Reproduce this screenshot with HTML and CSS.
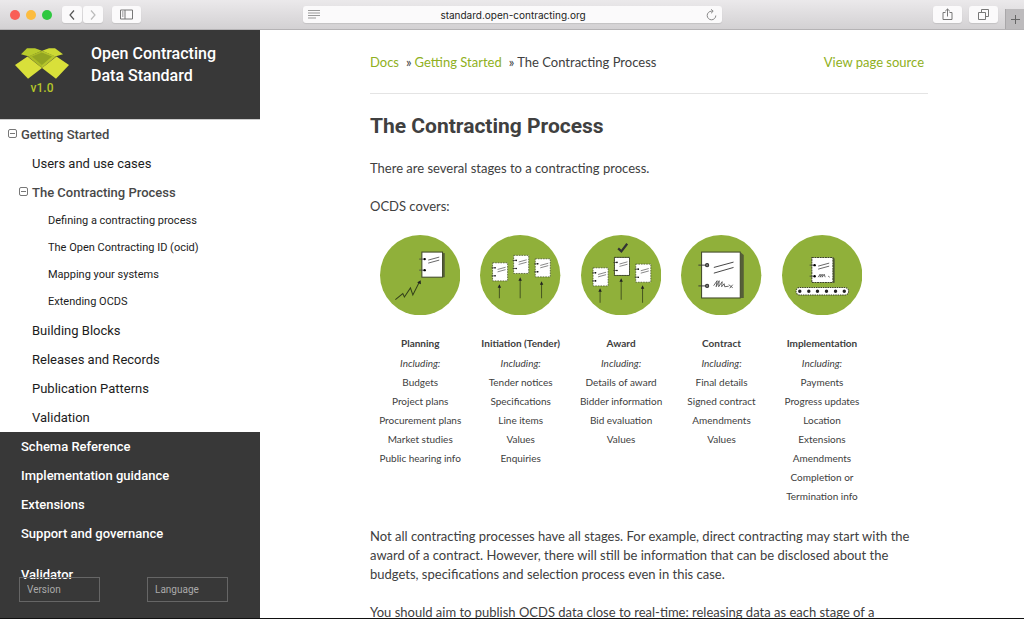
FILE: index.html
```html
<!DOCTYPE html>
<html lang="en">
<head>
<meta charset="utf-8">
<title>The Contracting Process</title>
<link rel="stylesheet" href="styles.css">
</head>
<body>
<svg class="defs" width="0" height="0" aria-hidden="true">
  <symbol id="note" viewBox="0 0 18 20" overflow="visible">
    <rect x="1" y="1" width="15" height="18" fill="#fff" stroke="#3e4a22" stroke-width=".7" stroke-dasharray="1.6 1"/>
    <path d="M0 6h3M0 14h3" stroke="#333" stroke-width=".8"/><circle cx="3.500" cy="6" r=".8"/><circle cx="3.500" cy="14" r=".8"/>
    <path d="M6 7.600l8-2.200M6 10l8-2.200" stroke="#555" stroke-width=".7"/>
  </symbol>
</svg>
<header class="toolbar">
  <div class="lights"><i class="light red"></i><i class="light amber"></i><i class="light green"></i></div>
  <div class="history">
    <button class="tool" aria-label="Back"><svg width="8" height="12" viewBox="0 0 8 12"><path d="M6 1.500L2 6l4 4.500" fill="none" stroke="#555" stroke-width="1.200"/></svg></button>
    <button class="tool" aria-label="Forward"><svg width="8" height="12" viewBox="0 0 8 12"><path d="M2 1.500L6 6l-4 4.500" fill="none" stroke="#bbb" stroke-width="1.200"/></svg></button>
  </div>
  <button class="tool wide" aria-label="Sidebar"><svg width="13" height="11" viewBox="0 0 13 11" fill="none" stroke="#777"><path d="M.5 1h12v9H.5zM5 1v9M2 3h1.500M2 5h1.500M2 7h1.500"/></svg></button>
  <div class="address">
    <svg width="12" height="9" viewBox="0 0 12 9" stroke="#999"><path d="M0 .5h12M0 3h12M0 5.500h12M0 8h8"/></svg>
    <input class="url" aria-label="Address" value="standard.open-contracting.org">
    <button class="reload" aria-label="Reload"><svg width="11" height="12" viewBox="0 0 11 12" fill="none" stroke="#888"><path d="M9.800 6.500A4.300 4.300 0 1 1 5.500 2.200H7M5 .3L7.200 2.200 5 4.300"/></svg></button>
  </div>
  <div class="actions">
    <button class="tool wide" aria-label="Share"><svg width="11" height="13" viewBox="0 0 11 13" fill="none" stroke="#777"><path d="M3.500 4.500H1v7h9v-7H7.500M5.500 8.500V1M3.200 3.200L5.500 1l2.300 2.200"/></svg></button>
    <button class="tool wide" aria-label="Tabs"><svg width="11" height="11" viewBox="0 0 11 11" fill="none" stroke="#777"><path d="M.5 3.500h7v7h-7zM3.500 3.500v-3h7v7h-3"/></svg></button>
  </div>
  <button class="newtab" aria-label="New tab"><svg width="9" height="9" viewBox="0 0 9 9" stroke="#666"><path d="M4.500 0v9M0 4.500h9"/></svg></button>
</header>
<div class="page">
  <aside class="side">
    <div class="brand">
      <div class="logo">
        <svg width="54" height="32" viewBox="0 0 54 32">
          <path d="M6 6.300L12 .3h8l7 2.500L14 8.500z" fill="#b9cb2c"/><path d="M48 6.300L40 .3h-6l-7 2.500L40 8.500z" fill="#cdd934"/>
          <path d="M13 8.500L27 2.800V20z" fill="#abbc26"/><path d="M41 8.500L27 2.800V20z" fill="#b6c62b"/><path d="M17 8.500L27 4.500l10 4L27 17z" fill="#93a522"/>
          <path d="M0 17L12.500 8.500 27 20 13 30.700z" fill="#d9e03a"/><path d="M54 17L41.500 8.500 27 20l14 10.700z" fill="#d9e03a"/>
        </svg>
        <span>v1.0</span>
      </div>
      <div class="brand-name">Open Contracting<br>Data Standard</div>
    </div>
    <nav class="nav">
      <div class="current">
        <div class="row top"><button class="fold" aria-label="Collapse Getting Started"></button><a href="#">Getting Started</a></div>
        <div class="row mid"><a href="#">Users and use cases</a></div>
        <div class="row mid open"><button class="fold" aria-label="Collapse The Contracting Process"></button><a href="#">The Contracting Process</a></div>
        <div class="leaves">
          <div class="row leaf"><a href="#">Defining a contracting process</a></div>
          <div class="row leaf"><a href="#">The Open Contracting ID (ocid)</a></div>
          <div class="row leaf"><a href="#">Mapping your systems</a></div>
          <div class="row leaf"><a href="#">Extending OCDS</a></div>
        </div>
        <div class="row mid"><a href="#">Building Blocks</a></div>
        <div class="row mid"><a href="#">Releases and Records</a></div>
        <div class="row mid"><a href="#">Publication Patterns</a></div>
        <div class="row mid"><a href="#">Validation</a></div>
      </div>
      <div class="row top"><a href="#">Schema Reference</a></div>
      <div class="row top"><a href="#">Implementation guidance</a></div>
      <div class="row top"><a href="#">Extensions</a></div>
      <div class="row top"><a href="#">Support and governance</a></div>
      <div class="row top apart"><a href="#">Validator</a></div>
    </nav>
    <div class="pickers">
      <select aria-label="Version"><option>Version</option></select>
      <select aria-label="Language"><option>Language</option></select>
    </div>
  </aside>
  <main class="main">
    <div class="crumbs"><a href="#">Docs</a><span class="sep">»</span><a href="#">Getting Started</a><span class="sep">»</span><span>The Contracting Process</span><a class="source" href="#">View page source</a></div>
    <h1>The Contracting Process</h1>
    <p>There are several stages to a contracting process.</p>
    <p>OCDS covers:</p>
    <div class="stages">
      <section class="stage">
        <svg viewBox="0 0 80 80"><circle cx="40" cy="40" r="40" fill="#90b03a"/>
          <path d="M62 18h2.500v24H62z" fill="#555f38"/><rect x="41.700" y="17" width="20.600" height="25" fill="#fff" stroke="#3d4527"/>
          <path d="M39 24h5M39 35h5M48 25l11-3M48 28l11-3" stroke="#444" stroke-width=".8"/><circle cx="44.500" cy="24" r="1.200"/><circle cx="44.500" cy="35" r="1.200"/>
          <path d="M15.300 64.300l7.400-6 1.600 3.400 6-9 2.400 7 6.500-13" fill="none" stroke="#33401a"/><path d="M40.500 45l.2 4-3.700-1.800z" fill="#222"/></svg>
        <b>Planning</b><em>Including:</em><span>Budgets</span><span>Project plans</span><span>Procurement plans</span><span>Market studies</span><span>Public hearing info</span>
      </section>
      <section class="stage">
        <svg viewBox="0 0 80 80"><circle cx="40" cy="40" r="40" fill="#90b03a"/>
          <use href="#note" x="11.500" y="26.700" width="18" height="20"/><use href="#note" x="32.500" y="19.300" width="18" height="20"/><use href="#note" x="54" y="22.700" width="18" height="20"/>
          <path d="M19.300 51v12M40 44v19M61.300 48v15" stroke="#33401a" stroke-width=".8"/><path d="M19.300 49l1.700 3.500h-3.400zM40 42l1.700 3.500h-3.400zM61.300 46l1.700 3.500h-3.400z" fill="#222"/></svg>
        <b>Initiation (Tender)</b><em>Including:</em><span>Tender notices</span><span>Specifications</span><span>Line items</span><span>Values</span><span>Enquiries</span>
      </section>
      <section class="stage">
        <svg viewBox="0 0 80 80"><circle cx="40" cy="40" r="40" fill="#90b03a"/>
          <use href="#note" x="11" y="31.700" width="18" height="20"/><use href="#note" x="32.300" y="21.300" width="18" height="20"/><use href="#note" x="53.500" y="28" width="18" height="20"/>
          <path d="M33.300 22.300h15v18h-15z" fill="none" stroke="#3d4527" stroke-width=".8"/>
          <path d="M19 55v12.500M40 45v19.500M61.300 52v15.500" stroke="#33401a" stroke-width=".8"/><path d="M19 53l1.700 3.500h-3.400zM40 43l1.700 3.500h-3.400zM61.300 50l1.700 3.500h-3.400z" fill="#222"/>
          <path d="M37 13.300l3.200 3L46 8.700" fill="none" stroke="#333" stroke-width="2.200"/></svg>
        <b>Award</b><em>Including:</em><span>Details of award</span><span>Bidder information</span><span>Bid evaluation</span><span>Values</span>
      </section>
      <section class="stage">
        <svg viewBox="0 0 80 80"><circle cx="40" cy="40" r="40" fill="#90b03a"/>
          <path d="M59 17l3.500 3v42.700H59z" fill="#555f38"/><rect x="20.500" y="17" width="38.500" height="45.700" fill="#fff" stroke="#3d4527"/>
          <path d="M17.300 30H26M17.300 50.700H26M32.700 32.300L52.300 27M32.700 38l19.600-5.700" stroke="#333" stroke-width=".9"/><circle cx="26" cy="30" r="1.600" fill="#777" stroke="#333"/><circle cx="26" cy="50.700" r="1.600" fill="#777" stroke="#333"/>
          <path d="M32.500 50.500l3.500-5-1 6 3-6-.5 6 3.500-5-.5 5 2.500-3 .5 3 4-.5M47.500 49.500l4 3M51.500 49.500l-3 3.500" fill="none" stroke="#444" stroke-width=".8"/></svg>
        <b>Contract</b><em>Including:</em><span>Final details</span><span>Signed contract</span><span>Amendments</span><span>Values</span>
      </section>
      <section class="stage">
        <svg viewBox="0 0 80 80"><circle cx="40" cy="40" r="40" fill="#90b03a"/>
          <path d="M50 22.500l2.500 1v24H50z" fill="#555f38"/><rect x="29.700" y="22.300" width="21" height="25" fill="#fff" stroke="#3d4527" stroke-dasharray="2 .6"/>
          <path d="M27.500 30h4.500M27.500 41h4.500M36 31l11-3M36 34l11-3M36 42l2-3v3l2-3v3l2-3 1 3M46 41l1.500 1" fill="none" stroke="#444" stroke-width=".8"/><circle cx="32.500" cy="30" r="1.200"/><circle cx="32.500" cy="41" r="1.200"/>
          <rect x="14" y="52.300" width="52.300" height="7.500" rx="3.700" fill="#fff" stroke="#3d4527" stroke-dasharray="1.500 .8"/>
          <path d="M17.700 56h.01M26.700 56h.01M35.300 56h.01M44.300 56h.01M53.300 56h.01M62 56h.01" stroke="#222" stroke-width="3.400" stroke-linecap="round"/></svg>
        <b>Implementation</b><em>Including:</em><span>Payments</span><span>Progress updates</span><span>Location</span><span>Extensions</span><span>Amendments</span><span>Completion or</span><span>Termination info</span>
      </section>
    </div>
    <p>Not all contracting processes have all stages. For example, direct contracting may start with the award of a contract. However, there will still be information that can be disclosed about the budgets, specifications and selection process even in this case.</p>
    <p>You should aim to publish OCDS data close to real-time: releasing data as each stage of a</p>
  </main>
</div>
</body>
</html>
```
FILE: styles.css
```css
* { box-sizing: border-box; }
body { margin: 0; height: 100vh; display: flex; flex-direction: column; overflow: hidden; background: #fff; color: #404040; font: 13px/19px Lato, sans-serif; }
a { color: inherit; text-decoration: none; }
button { border: 0; padding: 0; background: none; display: flex; align-items: center; justify-content: center; }
.defs { position: absolute; }

.toolbar { flex: none; height: 30px; display: flex; align-items: center; padding-left: 10px; background: linear-gradient(#ebe9eb, #d3d1d3); border-bottom: 1px solid #b5b3b5; }
.lights { display: flex; gap: 6px; }
.light { width: 10px; height: 10px; border-radius: 50%; }
.red { background: #f95f57; }
.amber { background: #fcbc40; }
.green { background: #2fc840; }
.history { display: flex; gap: 1px; margin: 0 9px 0 10px; }
.tool { width: 20px; height: 17px; background: #fbfafb; border-radius: 3px; box-shadow: 0 1px 1px #c4c2c4; }
.wide { width: 29px; }
.address { flex: 1; height: 17px; margin-left: 162px; padding: 0 5px; display: flex; align-items: center; background: #fbfafb; border-radius: 3px; box-shadow: 0 1px 1px #c4c2c4; }
.url { flex: 1; min-width: 0; border: 0; padding: 0; background: none; text-align: center; color: #222; font: 10px/16px Inter, sans-serif; }
.actions { display: flex; gap: 7px; margin: 0 7px 0 211px; }
.newtab { align-self: flex-end; width: 19px; height: 20px; background: #bdbbbd; border-left: 1px solid #a9a7a9; }

.page { flex: 1; min-height: 0; display: flex; border-bottom: 1px solid #111; }
.side { position: relative; flex: none; width: 260px; overflow: hidden; background: #383838; font-family: Roboto, sans-serif; }
.brand { height: 89px; padding: 13px 15px; display: flex; gap: 22px; color: #fff; }
.logo { display: flex; flex-direction: column; align-items: center; padding-top: 5px; color: #b5c52a; font: 500 12px/16px Roboto, sans-serif; }
.brand-name { font: 500 16px/22px Roboto, sans-serif; }
.row { display: flex; align-items: center; height: 29px; color: #fff; font-size: 13px; }
.top { padding-left: 21px; font-weight: 500; }
.apart { margin-top: 12px; }
.current { background: #fff; border-top: 1px solid #ccc; }
.current .row { color: #1c1c1c; }
.current .top, .current .open { color: #484848; font-weight: 500; }
.mid { padding-left: 32px; }
.leaves { padding-bottom: 1px; }
.leaf { height: 27px; padding-left: 48px; font-size: 11px; }
.fold { width: 9px; height: 9px; margin: 0 4px 2px -13px; border: 1px solid #777; border-radius: 2px; }
.fold::before { content: ""; width: 5px; height: 1px; background: #777; }
.pickers { position: absolute; left: 19px; right: 32px; bottom: 16px; display: flex; justify-content: space-between; }
.pickers select { appearance: none; width: 81px; height: 25px; padding: 0 7px; border: 1px solid #666; border-radius: 0; background: none; color: #aaa; font: 10px Roboto, sans-serif; }

.main { flex: 1; min-width: 0; overflow: hidden; padding: 23px 96px 0 110px; }
.crumbs { display: flex; align-items: center; height: 41px; padding-bottom: 22px; margin-bottom: 20px; border-bottom: 1px solid #e4e4e4; }
.crumbs a { color: #8fb021; }
.sep { margin: 0 3px 0 7px; }
.crumbs .source { margin: 0 4px 0 auto; }
h1 { margin: 0 0 21px; font: 700 21px/24px Roboto, sans-serif; }
p { margin: 0 0 19px; }
.stages { display: grid; grid-template-columns: repeat(5, 1fr); width: 90%; margin-bottom: 21px; font-size: 10px; }
.stage { display: flex; flex-direction: column; align-items: center; white-space: nowrap; }
.stage svg { width: 80%; margin-bottom: 19px; }
.stage b { margin-bottom: 1px; }
```
